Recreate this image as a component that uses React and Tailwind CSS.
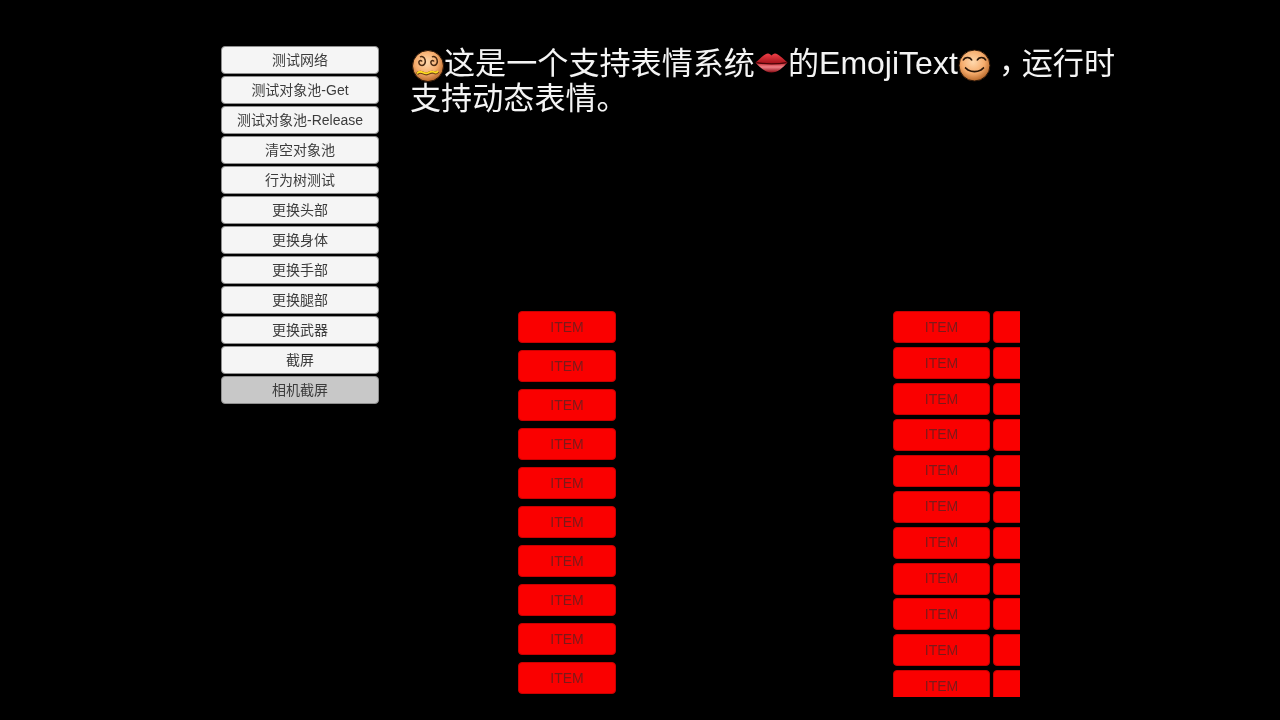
const FONT = "font-['Liberation_Sans','Noto_Sans_CJK_SC',sans-serif]";

const buttons = ['测试网络', '测试对象池-Get', '测试对象池-Release', '清空对象池', '行为树测试', '更换头部', '更换身体', '更换手部', '更换腿部', '更换武器', '截屏', '相机截屏'];
const leftItems = Array.from({ length: 10 });
const rightItems = Array.from({ length: 11 });

function FaceDefs({ id }) {
  return (
    <defs>
      <radialGradient id={id} cx="45%" cy="38%" r="62%">
        <stop offset="0%" stopColor="#ffd9ae" />
        <stop offset="60%" stopColor="#f6ac6c" />
        <stop offset="100%" stopColor="#b8682a" />
      </radialGradient>
    </defs>
  );
}

function DizzyFace() {
  return (
    <svg viewBox="0 0 34 33" className="inline-block w-[34px] h-[33px] align-[-8px]">
      <FaceDefs id="dizzy" />
      <circle cx="18" cy="17" r="15.5" fill="url(#dizzy)" stroke="#2a1608" strokeWidth="1" />
      <path d="M12 12.500c-.5-1.500-2.500-1.500-3 0s.5 4 3 4 4-3 3-6-3.500-3.500-5-2.500" fill="none" stroke="#4a2a12" strokeWidth="1.500" />
      <path d="M24 12.500c-.5-1.500-2.500-1.500-3 0s.5 4 3 4 4-3 3-6-3.500-3.500-5-2.500" fill="none" stroke="#4a2a12" strokeWidth="1.500" />
      <path d="M7 25c2-2.500 4-2 6-1s3 1.500 5 .5 4-2 6-1 3 .5 4-1" fill="none" stroke="#6b4014" strokeWidth="3" />
      <path d="M7 24.500c2-2.500 4-2 6-1s3 1.500 5 .5 4-2 6-1 3 .5 4-1" fill="none" stroke="#ffdc20" strokeWidth="1.800" />
    </svg>
  );
}

function Lips() {
  return (
    <svg viewBox="0 0 33 33" className="inline-block w-[33px] h-[33px] align-[-8px]">
      <defs>
        <linearGradient id="lipTop" x1="0" y1="0" x2="0" y2="1">
          <stop offset="0%" stopColor="#f04048" />
          <stop offset="100%" stopColor="#a01018" />
        </linearGradient>
        <linearGradient id="lipBottom" x1="0" y1="0" x2="0" y2="1">
          <stop offset="0%" stopColor="#c01c24" />
          <stop offset="45%" stopColor="#f08088" />
          <stop offset="100%" stopColor="#8c0c14" />
        </linearGradient>
      </defs>
      <path d="M0.500 13.500C5 10 9.500 4.500 13 4.500c1.500 0 2.500 1 3.500 2 1-1 2-2 3.500-2 3.500 0 8 5.500 12.500 9-4 1.500-10 1.500-16 1.500s-12 0-16-1.500z" fill="url(#lipTop)" />
      <path d="M0.500 13.500c4 1.500 10 1.500 16 1.500s12 0 16-1.500C28 18.500 23 23.500 16.500 23.500S5 18.500 0.500 13.500z" fill="url(#lipBottom)" />
      <path d="M1.500 13.600c5 1 10 1.200 15 1.200s10-.2 15-1.200" fill="none" stroke="#4a0408" strokeWidth="1.200" />
    </svg>
  );
}

function SmileFace() {
  return (
    <svg viewBox="0 0 33 33" className="inline-block w-[33px] h-[33px] align-[-8px]">
      <FaceDefs id="smile" />
      <circle cx="16.5" cy="16.500" r="15.5" fill="url(#smile)" stroke="#2a1608" strokeWidth="1" />
      <path d="M5 11.500c2-4 7-4 9 0" fill="none" stroke="#2a1608" strokeWidth="1.600" />
      <path d="M19 11.500c2-4 7-4 9 0" fill="none" stroke="#2a1608" strokeWidth="1.600" />
      <path d="M7 18.500c1.500 1 2 2 3 2.500 4 2 9 2 13 0 1-.5 1.500-1.500 3-2.500" fill="none" stroke="#2a1608" strokeWidth="1.600" />
    </svg>
  );
}

function MenuButton({ label, pressed }) {
  return (
    <div className={`h-[28px] flex items-center justify-center rounded-[4px] border border-[#8f8f8f] text-[14px] text-[#3c3c3c] ${pressed ? 'bg-[#c8c8c8]' : 'bg-[#f5f5f5]'}`}>
      {label}
    </div>
  );
}

function Item({ wide }) {
  return (
    <div className={`h-[32px] shrink-0 flex items-center justify-center rounded-[4px] bg-[#fa0000] border border-[#c80000] text-[14px] text-[#7c1a1a] ${wide ? 'w-[98px]' : 'w-[97px]'}`}>
      ITEM
    </div>
  );
}

export default function App() {
  return (
    <div className={`w-[1280px] h-[720px] bg-black overflow-hidden flex pl-[221px] pt-[46px] will-change-transform ${FONT}`}>
      <div className="w-[158px] flex flex-col gap-[2px]">
        {buttons.map((b, i) => <MenuButton key={b} label={b} pressed={i === buttons.length - 1} />)}
      </div>

      <div className="ml-[31px] w-[721px] flex flex-col">
        <div className="h-[265px] -mt-[2px] mb-[2px] text-[31.1px] leading-[34px] text-[#f4f4f4]">
          <DizzyFace />这是一个支持表情系统<Lips />的<span className="text-[32px]">EmojiText</span><SmileFace /><span className="inline-block w-[31px] translate-y-[8px] font-['Noto_Sans_CJK_TC']">，</span>运行时支持动态表情。
        </div>

        <div className="flex">
          <div className="ml-[108px] w-[98px] flex flex-col gap-[7px]">
            {leftItems.map((_, i) => <Item key={i} wide />)}
          </div>
          <div className="ml-[277px] w-[127px] h-[386px] pt-[0.3px] overflow-hidden flex flex-col gap-[3.9px]">
            {rightItems.map((_, i) => (
              <div key={i} className="flex gap-[3px]">
                <Item />
                <Item />
              </div>
            ))}
          </div>
        </div>
      </div>
    </div>
  );
}
